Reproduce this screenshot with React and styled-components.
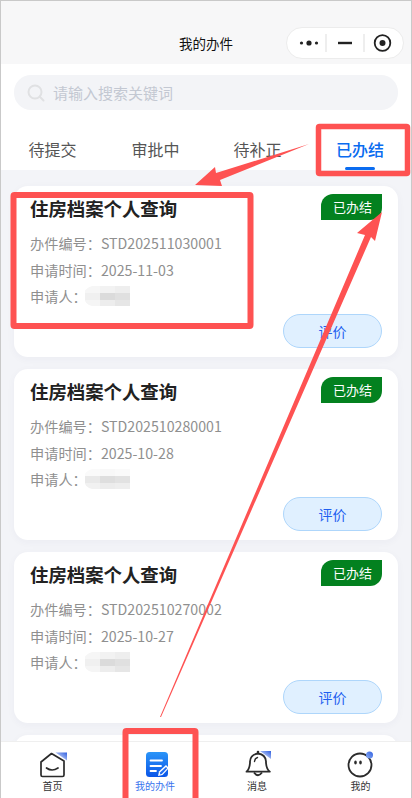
import React from 'react';
import styled, {createGlobalStyle} from 'styled-components';

const GlobalStyle = createGlobalStyle`
    * { box-sizing: border-box; }
    html, body { margin: 0; padding: 0; background: #ffffff; }
    body { font-family: "Noto Sans CJK SC", "Noto Sans", sans-serif; }
`;

const Page = styled.div`
    position: relative;
    width: 412px;
    height: 798px;
    overflow: hidden;
    display: flex;
    flex-direction: column;
    background: #f3f4f8;
`;

const Frame = styled.div`
    position: absolute;
    inset: 0;
    border: 1px solid #c9c9c9;
    border-bottom: 0;
    pointer-events: none;
    z-index: 5;
`;

const Header = styled.div`
    height: 64px;
    flex: none;
    background: #f7f7f8;
    display: flex;
    align-items: flex-start;
    padding: 27px 8px 0 179px;
    justify-content: space-between;
`;

const HeaderTitle = styled.div`
    font-size: 13.5px;
    line-height: 32px;
    color: #111111;
`;

const Capsule = styled.div`
    width: 118px;
    height: 32px;
    border-radius: 16px;
    background: #ffffff;
    border: 1px solid #ececec;
    display: flex;
    align-items: center;
    justify-content: center;
`;

const SearchArea = styled.div`
    flex: none;
    background: #ffffff;
    padding: 11px 14px 0;
`;

const SearchBox = styled.div`
    height: 35px;
    border-radius: 17px;
    background: #f3f4f7;
    display: flex;
    align-items: center;
    padding-left: 13px;
    gap: 8px;
    font-size: 15px;
    color: #c3c8d2;
`;

const Tabs = styled.div`
    flex: none;
    height: 60px;
    background: #ffffff;
    display: grid;
    grid-template-columns: 105px 101px 103px 102px;
`;

const Tab = styled.div`
    position: relative;
    display: flex;
    justify-content: center;
    padding-top: 27px;
    font-size: 16px;
    line-height: 24px;
    color: ${p => (p.$active ? '#0a6cf0' : '#555555')};
    font-weight: ${p => (p.$active ? 500 : 400)};
    &::after {
        content: '';
        display: ${p => (p.$active ? 'block' : 'none')};
        position: absolute;
        bottom: 0;
        left: 50%;
        margin-left: -15px;
        width: 30px;
        height: 3px;
        border-radius: 2px;
        background: #0a6cf0;
    }
`;

const List = styled.div`
    flex: 1;
    min-height: 0;
    overflow: hidden;
    padding: 16px 14px 0;
    display: flex;
    flex-direction: column;
    gap: 12px;
`;

const Card = styled.div`
    position: relative;
    flex: none;
    height: 171px;
    background: #ffffff;
    border-radius: 14px;
    padding: 9px 16px 0;
    box-shadow: 0 2px 8px rgba(40, 50, 90, 0.04);
`;

const CardTitle = styled.div`
    font-size: 18.4px;
    line-height: 26px;
    font-weight: 700;
    color: #222222;
    margin-bottom: 9px;
`;

const InfoLine = styled.div`
    display: flex;
    align-items: center;
    height: 26.5px;
    font-size: 14.2px;
    color: #8f8f8f;
    svg { margin-left: -3px; }
`;

const Status = styled.div`
    position: absolute;
    top: 8px;
    right: 16px;
    width: 61px;
    height: 26px;
    padding-left: 2px;
    background: #03811f;
    color: #ffffff;
    font-size: 13px;
    line-height: 25px;
    text-align: center;
    border-radius: 12px 0 12px 0;
`;

const Actions = styled.div`
    position: absolute;
    right: 16px;
    bottom: 9px;
`;

const RateButton = styled.div`
    width: 99px;
    height: 34px;
    border-radius: 17px;
    background: #e0f0ff;
    border: 1px solid #aed6fb;
    color: #1f5ff0;
    font-size: 14px;
    line-height: 32px;
    text-align: center;
`;

const Nav = styled.div`
    position: relative;
    z-index: 2;
    flex: none;
    height: 57px;
    background: #ffffff;
    border-top: 1px solid #efefef;
    display: grid;
    grid-template-columns: 105px 100px 104px 103px;
`;

const NavItem = styled.div`
    display: flex;
    flex-direction: column;
    align-items: center;
    padding-top: 8px;
    font-size: 10px;
    line-height: 14px;
    color: ${p => (p.$active ? '#3a74ee' : '#333333')};
    svg { display: block; margin-bottom: 1px; }
`;

const Overlay = styled.svg`
    position: absolute;
    left: 0;
    top: 0;
    z-index: 4;
    pointer-events: none;
`;

const Masked = ({variant}) => {
    const cells = variant === 2
        ? ['#fafafa', '#f8f8f8', '#fafafa', '#e9e9e9', '#dedede', '#e2e2e2', '#f1f1f1', '#ececec', '#eeeeee']
        : ['#f6f6f6', '#f2f2f2', '#eeeeee', '#f0f0f0', '#dbdbdb', '#e0e0e0', '#f5f5f5', '#ededed', '#e6e6e6'];
    return (
        <svg width="46" height="20" viewBox="0 0 46 20">
            <clipPath id={`m${variant}`}><path d="M8 0H46V20H8Q0 18 0 10Q0 2 8 0Z" /></clipPath>
            <g clipPath={`url(#m${variant})`}>
                {cells.map((c, i) => (
                    <rect key={i} x={(i % 3) * 15 + 1} y={Math.floor(i / 3) * 7} width="15.5" height="7.5" fill={c} />
                ))}
            </g>
        </svg>
    );
};

const cards = [
    {no: 'STD202511030001', date: '2025-11-03', mask: 1},
    {no: 'STD202510280001', date: '2025-10-28', mask: 2},
    {no: 'STD202510270002', date: '2025-10-27', mask: 1},
];

const Corner = ({id}) => (
    <linearGradient id={id} x1="0" y1="1" x2="1" y2="0">
        <stop offset="0" stopColor="#ffffff" />
        <stop offset="1" stopColor="#2f5fe0" />
    </linearGradient>
);

const HomeIcon = () => (
    <svg width="28" height="28" viewBox="0 0 28 28">
        <defs><Corner id="c1" /></defs>
        <path d="M16.5 2.5H28V10.5Z" fill="url(#c1)" />
        <path d="M2 12L12.5 3.5L25 11V25Q25 26.5 23.5 26.5H3.5Q2 26.5 2 25Z" fill="none" stroke="#2b2b2b" strokeWidth="1.7" strokeLinejoin="round" />
        <path d="M7.5 18Q13 22 19 18" fill="none" stroke="#2b2b2b" strokeWidth="1.7" strokeLinecap="round" />
    </svg>
);

const EditIcon = () => (
    <svg width="28" height="28" viewBox="0 0 28 28">
        <defs>
            <linearGradient id="e1" x1="0" y1="0" x2="0" y2="1">
                <stop offset="0" stopColor="#2b95f8" />
                <stop offset="1" stopColor="#0a55e8" />
            </linearGradient>
        </defs>
        <rect x="5" y="2" width="22" height="25" rx="3.5" fill="url(#e1)" />
        <path d="M9.5 10.5H21M9.5 16H20M9.5 21H15" stroke="#ffffff" strokeWidth="1.8" strokeLinecap="round" />
        <path d="M17 26L18 21.5L25 15L28 18L21.5 25Z" fill="#ffffff" />
        <path d="M18.8 24.6L19.3 22.3L25 17L26.2 18.2L20.8 24Z" fill="#1f6cf0" />
    </svg>
);

const BellIcon = () => (
    <svg width="28" height="28" viewBox="0 0 28 28">
        <defs><Corner id="c2" /></defs>
        <path d="M17 1H28V9Z" fill="url(#c2)" />
        <path d="M3.5 21.7Q6.5 19 7 13V11.5Q7.5 4.5 15 3.5Q22.5 4.5 23 11.5V13Q23.5 19 26.8 21.7Z" fill="none" stroke="#2b2b2b" strokeWidth="1.8" strokeLinejoin="round" />
        <path d="M11 22.5Q15 28 19 22.5" fill="none" stroke="#2b2b2b" strokeWidth="1.8" />
        <path d="M11.5 11.5Q12 8 14.5 7.5" fill="none" stroke="#2b2b2b" strokeWidth="1.4" strokeLinecap="round" />
        <rect x="13.8" y="0.8" width="2.4" height="3" rx="1" fill="#2b2b2b" />
    </svg>
);

const FaceIcon = () => (
    <svg width="28" height="28" viewBox="0 0 28 28">
        <defs>
            <linearGradient id="c3" x1="0" y1="1" x2="1" y2="0">
                <stop offset="0" stopColor="#8fb0f5" />
                <stop offset="1" stopColor="#2f5fe0" />
            </linearGradient>
        </defs>
        <circle cx="13" cy="15" r="11.5" fill="none" stroke="#2b2b2b" strokeWidth="1.8" />
        <ellipse cx="8.5" cy="12.5" rx="1.3" ry="2" fill="#2b2b2b" />
        <ellipse cx="13.5" cy="12.5" rx="1.3" ry="2" fill="#2b2b2b" />
        <circle cx="22.5" cy="5" r="3.5" fill="url(#c3)" />
    </svg>
);

const navs = [
    {label: '首页', Icon: HomeIcon},
    {label: '我的办件', Icon: EditIcon, active: true},
    {label: '消息', Icon: BellIcon},
    {label: '我的', Icon: FaceIcon},
];

const App = () => (
    <>
        <GlobalStyle />
        <Page>
            <Header>
                <HeaderTitle>我的办件</HeaderTitle>
                <Capsule>
                    <svg width="104" height="24" viewBox="0 0 104 24">
                        <circle cx="8.5" cy="12" r="1.6" fill="#222" />
                        <circle cx="16" cy="12" r="2.6" fill="#222" />
                        <circle cx="23.5" cy="12" r="1.6" fill="#222" />
                        <path d="M33 3V21M71 3V21" stroke="#dddddd" strokeWidth="1" />
                        <path d="M45 12H59" stroke="#222" strokeWidth="2.4" />
                        <circle cx="89.5" cy="12" r="7.8" fill="none" stroke="#222" strokeWidth="1.8" />
                        <circle cx="89.5" cy="12" r="3" fill="#222" />
                    </svg>
                </Capsule>
            </Header>
            <SearchArea>
                <SearchBox>
                    <svg width="18" height="18" viewBox="0 0 18 18">
                        <circle cx="8" cy="8" r="6.5" fill="none" stroke="#e0e1e3" strokeWidth="2" />
                        <path d="M12.8 12.8L16.5 16.5" stroke="#e0e1e3" strokeWidth="2" strokeLinecap="round" />
                    </svg>
                    请输入搜索关键词
                </SearchBox>
            </SearchArea>
            <Tabs>
                <Tab>待提交</Tab>
                <Tab>审批中</Tab>
                <Tab>待补正</Tab>
                <Tab $active>已办结</Tab>
            </Tabs>
            <List>
                {cards.map(c => (
                    <Card key={c.no}>
                        <CardTitle>住房档案个人查询</CardTitle>
                        <Status>已办结</Status>
                        <InfoLine>办件编号：{c.no}</InfoLine>
                        <InfoLine>申请时间：{c.date}</InfoLine>
                        <InfoLine>申请人：<Masked variant={c.mask} /></InfoLine>
                        <Actions><RateButton>评价</RateButton></Actions>
                    </Card>
                ))}
                <Card />
            </List>
            <Nav>
                {navs.map(({label, Icon, active}) => (
                    <NavItem key={label} $active={active}>
                        <Icon />
                        {label}
                    </NavItem>
                ))}
            </Nav>
            <Frame />
            {/* red annotations drawn over the screenshot */}
            <Overlay width="412" height="798" viewBox="0 0 412 798">
                <g fill="none" stroke="#fe5252" strokeLinejoin="round">
                    <rect x="318.5" y="126.5" width="89" height="47" strokeWidth="5.5" rx="1" />
                    <rect x="13.5" y="195" width="237" height="131" strokeWidth="6" rx="1" />
                    <rect x="125.5" y="731" width="70" height="80" strokeWidth="6" rx="1" />
                </g>
                <path d="M309 144L216 173L215 167L195 185L222 186L220 180Z" fill="#fe5252" />
                <path d="M160 717L365 235L357 233L382 212L375 241L371 237L161 717Z" fill="#fe5252" />
            </Overlay>
        </Page>
    </>
);

export default App;
